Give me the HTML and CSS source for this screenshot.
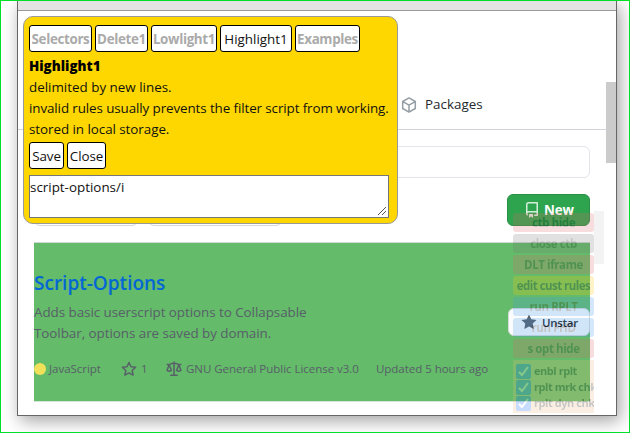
FILE: index.html
```html
<!DOCTYPE html>
<html lang="en">
<head>
<meta charset="utf-8">
<title>Script-Options</title>
<link rel="stylesheet" href="styles.css">
</head>
<body>
<div class="desktop">
  <div class="window">
    <div class="titlebar"></div>
    <main class="page">
      <nav class="tabs"><span class="tab"><svg width="16" height="16" viewBox="0 0 16 16" fill="none" stroke="#959da5" stroke-width="1.5" stroke-linejoin="round"><path d="M8 .9 14.3 4.5v7L8 15.1 1.7 11.5v-7zM1.9 4.7 8 8.2l6.1-3.5M8 8.2V15"/></svg><span class="t-packages">Packages</span></span></nav>
      <div class="content">
        <div class="search"></div>
        <div class="filters"><span class="filter type"></span><span class="filter lang"></span><span class="new"><svg width="16" height="16" viewBox="0 0 16 16" fill="#d5eedb"><path fill-rule="evenodd" d="M2 2.5A2.5 2.5 0 0 1 4.5 0h8.75a.75.75 0 0 1 .75.75v12.5a.75.75 0 0 1-.75.75h-2.5a.75.75 0 1 1 0-1.5h1.75v-2h-8a1 1 0 0 0-.714 1.7.75.75 0 0 1-1.072 1.05A2.5 2.5 0 0 1 2 11.5zm10.5-1h-8a1 1 0 0 0-1 1v6.7A2.5 2.5 0 0 1 4.5 9h8zM5 12.25v3.25a.25.25 0 0 0 .4.2l1.45-1.09a.25.25 0 0 1 .3 0L8.6 15.7a.25.25 0 0 0 .4-.2v-3.25a.25.25 0 0 0-.25-.25h-3.5a.25.25 0 0 0-.25.25z"/></svg><span class="t-new">New</span></span></div>
        <article class="repo">
          <div class="info">
            <h3>Script-Options</h3>
            <p><span class="desc1">Adds basic userscript options to Collapsable</span><br><span class="desc2">Toolbar, options are saved by domain.</span></p>
            <div class="meta">
              <span class="item js"><i class="dot"></i><span class="t-js">JavaScript</span></span>
              <span class="item stars"><svg width="16" height="16" viewBox="0 0 16 16" fill="none" stroke="#586069" stroke-width="1.5" stroke-linejoin="round"><path d="m8 1.5 2 4.2 4.6.6-3.4 3.2.9 4.6L8 11.9l-4.1 2.2.9-4.6-3.4-3.2 4.6-.6z"/></svg><span>1</span></span>
              <span class="item license"><svg width="16" height="16" viewBox="0 0 16 16" fill="none" stroke="#586069" stroke-width="1.5" stroke-linecap="round" stroke-linejoin="round"><path d="M8 .9v13.4M4.8 14.3h6.4M1.2 3.6h2L6 2.4h4l2.8 1.2h2M3.2 3.8 1 9.3q2.2 2 4.4 0zM12.8 3.8l-2.2 5.5q2.2 2 4.4 0z"/></svg><span class="t-license">GNU General Public License v3.0</span></span>
              <span class="item"><span class="t-updated">Updated 5 hours ago</span></span>
            </div>
          </div>
          <span class="unstar"><svg width="16" height="16" viewBox="0 0 16 16" fill="#586069"><path d="m8 .4 2.3 4.8 5.3.7-3.9 3.7 1 5.3L8 12.4l-4.7 2.5 1-5.3L.4 5.9l5.3-.7z"/></svg><span class="t-unstar">Unstar</span></span>
        </article>
      </div>
    </main>
    <div class="scroll"></div>
    <div class="strip"></div>
    <aside class="toolbar">
      <div class="tool red"><span>ctb hide</span></div>
      <div class="tool gray"><span>close ctb</span></div>
      <div class="tool red"><span>DLT iframe</span></div>
      <div class="tool gold"><span class="edit">edit cust rules</span></div>
      <div class="tool blue"><span>run RPLT</span></div>
      <div class="tool blue"><span>run FHD</span></div>
      <div class="tool red"><span>s opt hide</span></div>
      <div class="checks">
        <div class="check"><i><svg width="15" height="15" viewBox="0 0 15 15"><path d="m3 8 3 3 6-8"/></svg></i><span>enbl rplt</span></div>
        <div class="check"><i><svg width="15" height="15" viewBox="0 0 15 15"><path d="m3 8 3 3 6-8"/></svg></i><span>rplt mrk chk</span></div>
        <div class="check"><i><svg width="15" height="15" viewBox="0 0 15 15"><path d="m3 8 3 3 6-8"/></svg></i><span>rplt dyn chk</span></div>
      </div>
    </aside>
    <section class="popup">
      <div class="row">
        <button class="b1">Selectors</button><button class="b2">Delete1</button><button class="b3">Lowlight1</button><button class="b4 active">Highlight1</button><button class="b5">Examples</button>
      </div>
      <div class="text">
        <div><strong>Highlight1</strong></div>
        <div><span class="l1">delimited by new lines.</span></div>
        <div><span class="l2">invalid rules usually prevents the filter script from working.</span></div>
        <div><span class="l3">stored in local storage.</span></div>
      </div>
      <div class="row actions"><button class="b6">Save</button><button class="b7">Close</button></div>
      <div class="editor"><span>script-options/i</span><svg width="10" height="10" viewBox="0 0 10 10" stroke="#555" stroke-width="1"><path d="M1 9 9 1M5 9l4-4"/></svg></div>
    </section>
  </div>
</div>
</body>
</html>
```
FILE: styles.css
```css
* { box-sizing: border-box; }
body { margin: 0; font-family: "Open Sans", "Noto Sans", sans-serif; font-size: 13.4px; line-height: 21px; color: #24292e; }
svg { display: block; flex: none; }
span { white-space: nowrap; }
.desktop { width: 630px; height: 433px; border: 1px solid #00e026; overflow: hidden; background: #fff; padding-left: 16px; }
.window { position: relative; width: 600px; height: 415px; border: 1px solid #666; border-top: 0; box-shadow: 3px 5px 16px rgba(0,0,0,.36); background: #fff; }
.titlebar { height: 10px; background: #e3e3e3; border-bottom: 1px solid #999; }
.tabs { height: 119px; border-bottom: 1px solid #d1d5da; width: 588px; display: flex; align-items: flex-end; padding: 0 0 14px 383px; }
.tab { display: flex; align-items: center; gap: 8px; }
.content { padding: 16px 0 0 16px; width: 572px; }
.search { height: 32px; border: 1px solid #e1e4e8; border-radius: 6px; }
.filters { display: flex; margin-top: 16px; height: 32px; gap: 10px; }
.filter { border: 1px solid #d5d8da; border-radius: 6px; height: 32px; }
.type { width: 104px; }
.lang { width: 134px; }
.new { margin-left: auto; width: 83px; height: 32px; border: 1px solid #2a8f47; border-radius: 6px; background: #2ea44f; color: #fff; font-weight: 700; letter-spacing: -.1px; display: flex; align-items: center; gap: 4px; padding-left: 16px; }
.repo { display: flex; margin-top: 16px; height: 160px; background: #64bb69; border-top: 1px solid #ccd8d0; border-bottom: 1px solid #d5e5da; justify-content: space-between; align-items: center; }
.info { align-self: flex-start; padding-top: 25px; }
h3 { margin: 0; font-size: 19px; line-height: 30px; font-weight: 600; color: #0366d6; }
p { margin: 4px 0 0; color: #586069; letter-spacing: -.04px; }
.meta { display: flex; margin-top: 14px; font-size: 11.5px; color: #586069; line-height: 22px; letter-spacing: -.03px; }
.item { display: flex; align-items: center; gap: 4px; }
.js { width: 87px; gap: 3px; }
.stars { width: 45px; }
.license { width: 210px; }
.dot { width: 12px; height: 12px; border-radius: 50%; background: #f1e05a; }
.unstar { display: flex; align-items: center; gap: 5px; width: 82px; height: 28px; background: #fafbfc; border: 1px solid #d5dbd7; border-radius: 6px; padding-left: 12px; font-size: 11.5px; font-weight: 600; letter-spacing: -.3px; flex: none; margin-left: -82px; }
.scroll { position: absolute; left: 588px; top: 81px; width: 10px; height: 81px; background: #cbcbcb; }
.strip { position: absolute; left: 576px; top: 210px; width: 10px; height: 53px; background: #f3f3f3; }
.toolbar { position: absolute; left: 495px; top: 212px; width: 81px; height: 200px; overflow: hidden; opacity: .22; display: flex; flex-direction: column; gap: 2px; font-size: 11.5px; font-weight: 700; letter-spacing: -.4px; color: #000; }
.tool { height: 19px; line-height: 19px; border-radius: 3px; text-align: center; flex: none; overflow: hidden; }
.edit { letter-spacing: -.55px; }
.red { background: #dc646a; }
.gray { background: #777; }
.gold { background: #ffca00; }
.blue { background: #4295ee; }
.checks { background: #eab880; height: 53px; padding: 3px 0 3px 3px; }
.check { display: flex; align-items: center; height: 16px; line-height: 15px; gap: 3px; font-size: 11px; letter-spacing: -.45px; }
.check span { padding-bottom: 1px; }
.check i { width: 15px; height: 15px; border-radius: 2px; background: #0060ff; flex: none; }
.check path { fill: none; stroke: #fff; stroke-width: 2; }
.popup { position: absolute; left: 5px; top: 15px; width: 375px; height: 208px; background: #ffd700; border: 1px solid #999; border-radius: 10px; padding: 8px 5px; color: #111; }
.row { display: flex; gap: 3px; }
button { font: inherit; font-weight: 700; letter-spacing: -.35px; color: #aaa; background: #fff; border: 1px solid #000; border-radius: 3px; height: 27px; line-height: 26px; padding: 0; white-space: nowrap; display: flex; justify-content: center; }
.active { color: #111; font-weight: 500; letter-spacing: 0; }
.b1 { width: 63px; } .b2 { width: 53px; } .b3 { width: 66px; } .b4 { width: 72px; } .b5 { width: 65px; }
.text { margin-top: 4px; height: 84px; }
.l2 { letter-spacing: -.1px; }
.l3 { letter-spacing: -.05px; }
strong { font-weight: 800; color: #000; }
.actions { margin-top: 2px; }
.actions button { color: #111; font-weight: 400; letter-spacing: -.1px; }
.b6 { width: 35px; } .b7 { width: 39px; }
.editor { margin-top: 6px; width: 360px; height: 43px; background: #fff; border: 1px solid #767676; display: flex; justify-content: space-between; align-items: flex-end; padding: 1px 1px 1px 0; }
.editor > span { align-self: flex-start; }
```
